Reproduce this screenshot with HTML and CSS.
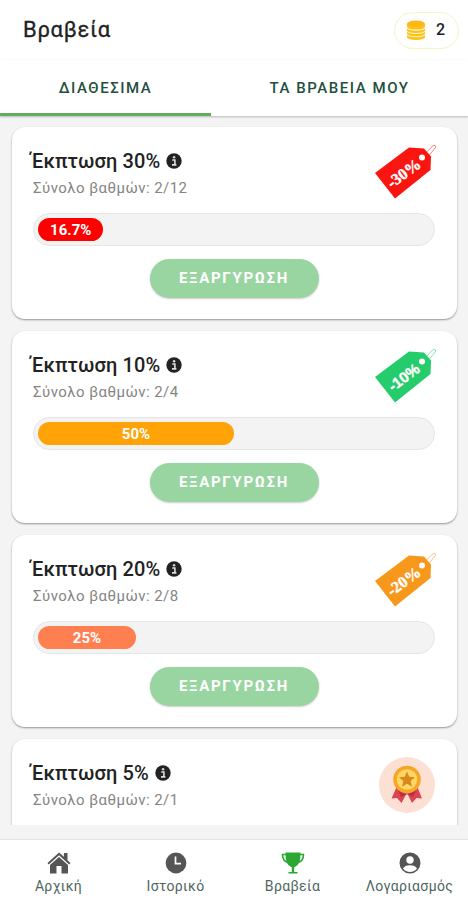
FILE: index.html
```html
<!DOCTYPE html>
<html lang="el">
<head>
    <meta charset="UTF-8">
    <meta name="viewport" content="width=device-width, initial-scale=1.0">
    <title>Βραβεία</title>
    <link rel="stylesheet" href="styles.css">
</head>
<body>
    <svg class="defs" width="0" height="0">
        <symbol id="info" viewBox="0 0 16 16">
            <circle cx="8" cy="8" r="7.7" fill="#222"/>
            <path d="M6.2 7h2.7v4.6M6 11.9h4.4" fill="none" stroke="#ddd" stroke-width="1.6"/>
            <circle cx="8.1" cy="4.3" r="1.2" fill="#ddd"/>
        </symbol>
        <symbol id="tag" viewBox="0 0 64 58">
            <path d="M49 13L58.5 3Q62 1 61.5 4.5L53 15" fill="none" stroke="currentColor" stroke-width="1" opacity=".55"/>
            <path d="M1 30L35 4.5L50 5.5L57 13.5L56.5 27L21 55.5Z" fill="currentColor"/>
            <circle cx="48" cy="14.5" r="3" fill="#fff"/>
        </symbol>
    </svg>
    <header class="header">
        <h1>Βραβεία</h1>
        <div class="points">
            <svg width="20" height="21" viewBox="0 0 20 21">
                <path d="M1 4v13c0 4 18 4 18 0V4z" fill="#ffc21c"/>
                <path d="M1 7.500c1 3.500 17 3.500 18 0M1 10.800c1 3.500 17 3.500 18 0M1 14.100c1 3.500 17 3.500 18 0" fill="none" stroke="#fff3c4" stroke-width="1.100"/>
                <ellipse cx="10" cy="4" rx="9" ry="3.500" fill="#fdb813"/>
            </svg>
            <span>2</span>
        </div>
    </header>
    <div class="tabs">
        <div class="tab active">ΔΙΑΘΕΣΙΜΑ</div>
        <div class="tab">ΤΑ ΒΡΑΒΕΙΑ ΜΟΥ</div>
    </div>
    <main class="rewards">
        <div class="card">
            <div class="card-top">
                <div>
                    <h2>Έκπτωση 30% <svg class="info"><use href="#info"/></svg></h2>
                    <p>Σύνολο βαθμών: 2/12</p>
                </div>
                <svg class="tag red" viewBox="0 0 64 58">
                    <use href="#tag"/>
                    <text class="tag-text" transform="translate(30 30.5) rotate(-37)" y="5">-30%</text>
                </svg>
            </div>
            <div class="progress"><div class="bar red-bar" style="width: 16.7%">16.7%</div></div>
            <button>ΕΞΑΡΓΥΡΩΣΗ</button>
        </div>
        <div class="card">
            <div class="card-top">
                <div>
                    <h2>Έκπτωση 10% <svg class="info"><use href="#info"/></svg></h2>
                    <p>Σύνολο βαθμών: 2/4</p>
                </div>
                <svg class="tag green" viewBox="0 0 64 58">
                    <use href="#tag"/>
                    <text class="tag-text sans" transform="translate(30 30.5) rotate(-37)" y="5">-10%</text>
                </svg>
            </div>
            <div class="progress"><div class="bar amber-bar" style="width: 50%">50%</div></div>
            <button>ΕΞΑΡΓΥΡΩΣΗ</button>
        </div>
        <div class="card">
            <div class="card-top">
                <div>
                    <h2>Έκπτωση 20% <svg class="info"><use href="#info"/></svg></h2>
                    <p>Σύνολο βαθμών: 2/8</p>
                </div>
                <svg class="tag orange" viewBox="0 0 64 58">
                    <use href="#tag"/>
                    <text class="tag-text" transform="translate(30 30.5) rotate(-37)" y="5">-20%</text>
                </svg>
            </div>
            <div class="progress"><div class="bar coral-bar" style="width: 25%">25%</div></div>
            <button>ΕΞΑΡΓΥΡΩΣΗ</button>
        </div>
        <div class="card">
            <div class="card-top">
                <div>
                    <h2>Έκπτωση 5% <svg class="info"><use href="#info"/></svg></h2>
                    <p>Σύνολο βαθμών: 2/1</p>
                </div>
                <svg class="medal" viewBox="0 0 56 56">
                    <circle cx="28" cy="28" r="28" fill="#fde0d4"/>
                    <path d="M18 29L12.500 41.500L18 41L22.500 46L28 36L33 46L37.500 41L43 41.500L38 29Z" fill="#dc4455"/>
                    <path d="M19 33L28 38L37 33L34 40L28 37L22 40Z" fill="#b92f43"/>
                    <circle cx="28" cy="22.500" r="13.800" fill="#f5a623"/>
                    <circle cx="28" cy="22.500" r="10.300" fill="#ffd766"/>
                    <path d="M28 14.500l2.300 5.200 5.700.600-4.300 3.800 1.300 5.600-5-2.900-5 2.900 1.300-5.600-4.300-3.800 5.700-.600z" fill="#d88a1c"/>
                </svg>
            </div>
        </div>
    </main>
    <nav class="nav">
        <div class="nav-item">
            <svg width="24" height="24" viewBox="0 0 24 24" fill="#555">
                <path d="M12 1.500L.500 12l1.300 1.500L12 4.300l10.200 9.200 1.300-1.500-3-2.800V2h-3.600v3.700z"/>
                <path d="M12 6L3 14v8.500h6.500V15h5v7.500H21V14z"/>
            </svg>
            <span>Αρχική</span>
        </div>
        <div class="nav-item">
            <svg width="24" height="24" viewBox="0 0 24 24">
                <circle cx="12" cy="12" r="10.400" fill="#555"/>
                <path d="M11.500 5.500v7.200h5.500" fill="none" stroke="#fff" stroke-width="1.700"/>
            </svg>
            <span>Ιστορικό</span>
        </div>
        <div class="nav-item">
            <svg width="24" height="24" viewBox="0 0 24 24">
                <path d="M6 3.500H1.500c0 5 2.500 7.500 6.500 8M18 3.500h4.500c0 5-2.500 7.500-6.500 8" fill="none" stroke="#2aa832" stroke-width="1.600"/>
                <path d="M4.500 1.500h15c0 7.500-.700 12.500-6.300 14.800V21h3.300v1.500h-9V21h3.300v-4.700C5.200 14 4.500 9 4.500 1.500z" fill="#2aa832"/>
            </svg>
            <span>Βραβεία</span>
        </div>
        <div class="nav-item">
            <svg width="24" height="24" viewBox="0 0 24 24">
                <circle cx="12" cy="12" r="9.500" fill="#555" stroke="#555" stroke-width="2"/>
                <circle cx="12" cy="9" r="3.700" fill="#fff"/>
                <path d="M5 17.500c1.500-4.500 12.500-4.500 14 0-3 4.500-11 4.500-14 0z" fill="#fff"/>
            </svg>
            <span>Λογαριασμός</span>
        </div>
    </nav>
</body>
</html>
```
FILE: styles.css
```css
* {
    box-sizing: border-box;
}
body {
    margin: 0;
    height: 900px;
    display: flex;
    flex-direction: column;
    overflow: hidden;
    font-family: Roboto, sans-serif;
    background: #f4f4f4;
    color: #222;
}
h1, h2, p {
    margin: 0;
}
.defs {
    display: none;
}
.header {
    height: 60px;
    flex: none;
    padding: 0 9px 0 23px;
    display: flex;
    align-items: center;
    justify-content: space-between;
    background: #fff;
}
h1 {
    font-size: 22px;
    line-height: 28px;
    font-weight: 400;
    letter-spacing: 0.7px;
    -webkit-text-stroke: 0.3px #222;
}
.points {
    width: 65px;
    height: 37px;
    padding: 0 13px 0 11px;
    display: flex;
    align-items: center;
    justify-content: space-between;
    border: 1px solid #f8f3c4;
    border-radius: 19px;
    font-size: 16px;
    font-weight: 500;
}
.points span {
    margin-top: -2px;
}
.tabs {
    height: 56px;
    flex: none;
    display: flex;
    background: #fff;
    box-shadow: 0 1px 2px rgba(0, 0, 0, 0.25);
}
.tab {
    flex: 1;
    display: flex;
    align-items: center;
    justify-content: center;
    font-size: 15px;
    font-weight: 500;
    letter-spacing: 1.55px;
    color: #244f40;
}
.tab.active {
    flex: 0 0 211px;
    border-bottom: 3px solid #60ad62;
    padding-top: 3px;
}
.rewards {
    height: 709px;
    flex: none;
    padding: 11px 11px 0 12px;
    display: flex;
    flex-direction: column;
    gap: 12px;
    overflow: hidden;
}
.card {
    height: 192px;
    flex: none;
    padding: 16px 22px 0 21px;
    background: #fff;
    border-radius: 13px;
    box-shadow: 0 1px 2px rgba(0, 0, 0, 0.4);
}
.card-top {
    height: 70px;
    display: flex;
    justify-content: space-between;
}
h2 {
    display: flex;
    align-items: center;
    gap: 6px;
    margin-top: 4px;
    margin-left: -2px;
    font-size: 20px;
    line-height: 28px;
    font-weight: 500;
    letter-spacing: 0.1px;
}
.info {
    width: 16px;
    height: 16px;
}
p {
    margin-top: 3px;
    font-size: 15px;
    line-height: 20px;
    letter-spacing: 0.45px;
    color: #858585;
}
.tag {
    width: 64px;
    height: 58px;
    margin-right: -3px;
}
.red {
    color: #fb1510;
}
.green {
    color: #25cc6c;
}
.orange {
    color: #f7981d;
}
.tag-text {
    font-family: "Liberation Serif", serif;
    font-size: 16px;
    font-weight: bold;
    text-anchor: middle;
    fill: #fff;
    stroke: #fff;
    stroke-width: 0.4px;
}
.tag-text.sans {
    font-family: "Liberation Sans", sans-serif;
    font-size: 15px;
}
.medal {
    width: 56px;
    height: 56px;
    margin-top: 2px;
}
.progress {
    height: 33px;
    padding: 4px;
    background: #f3f3f3;
    border: 1px solid #e5e5e5;
    border-radius: 17px;
}
.bar {
    height: 23px;
    border-radius: 12px;
    color: #fff;
    font-size: 15px;
    line-height: 24px;
    font-weight: 700;
    text-align: center;
}
.red-bar {
    background: #fe0000;
}
.amber-bar {
    background: #ffa307;
}
.coral-bar {
    background: #ff7f50;
}
button {
    display: block;
    width: 169px;
    height: 39px;
    margin: 13px auto 0;
    padding: 0 0 2px;
    border: none;
    border-radius: 20px;
    background: #98d5a0;
    box-shadow: 0 1px 2px rgba(0, 0, 0, 0.2);
    color: #fff;
    font-family: inherit;
    font-size: 15px;
    font-weight: 700;
    letter-spacing: 1.7px;
}
.nav {
    height: 60px;
    flex: none;
    margin-top: 15px;
    padding-top: 11px;
    display: flex;
    background: #fff;
    box-shadow: 0 -1px 1px rgba(0, 0, 0, 0.06);
}
.nav-item {
    flex: 1;
    display: flex;
    flex-direction: column;
    align-items: center;
    color: #4f6660;
    font-size: 14px;
    line-height: 22px;
    letter-spacing: 0.35px;
}
```
